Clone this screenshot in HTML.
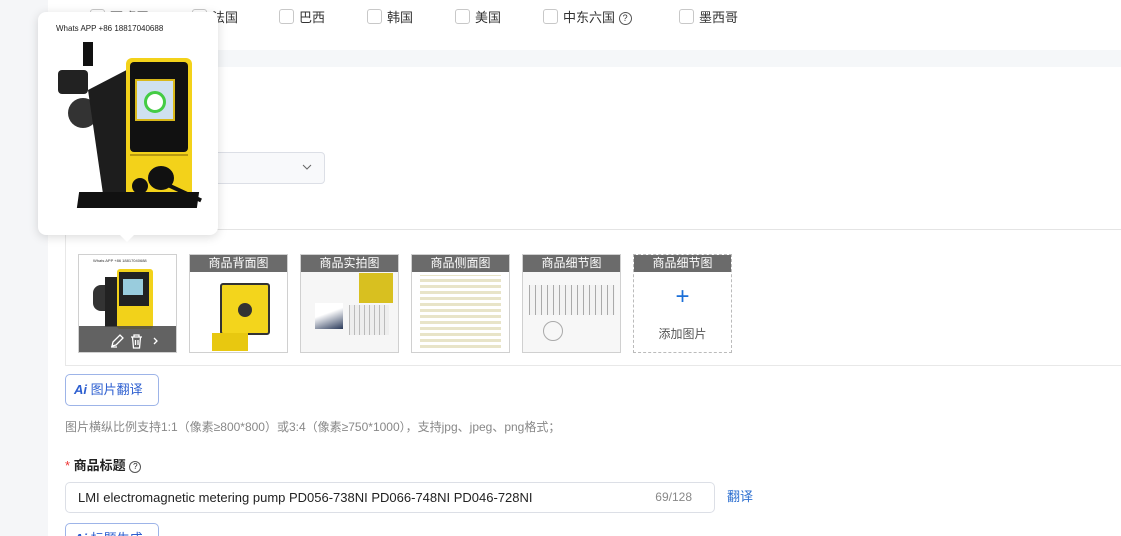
<!DOCTYPE html>
<html><head><meta charset="utf-8"><style>
*{box-sizing:border-box;margin:0;padding:0}
html,body{width:1121px;height:536px;overflow:hidden}
body{background:#fff;font-family:"Liberation Sans","Noto Sans CJK SC",sans-serif;font-size:13px;color:#333;position:relative}
.abs{position:absolute}
.cb{position:absolute;top:9px;width:15px;height:15px;border:1px solid #c8c8c8;border-radius:3px;background:#fff}
.cl{position:absolute;top:7px;font-size:13px;color:#333}
.th{position:absolute;top:254px;width:99px;height:99px;border:1px solid #d0d0d0;background:#f3f3f3;overflow:hidden}
.th .lab{position:absolute;left:0;top:0;width:100%;height:17px;background:#6b6b6b;color:#fff;font-size:12px;text-align:center;line-height:17px}
.doc{position:absolute;left:8px;right:8px;top:20px;bottom:4px;background:repeating-linear-gradient(0deg,#e8e4c8 0 3px,#fff 3px 6px)}
</style></head><body>
<div class="abs" style="left:0;top:0;width:48px;height:536px;background:#f5f6f8"></div>
<div class="abs" style="left:48px;top:50px;width:1073px;height:17px;background:#f5f7f9"></div>

<div class="cb" style="left:90px"></div><span class="cl" style="left:110px">西班牙</span>
<div class="cb" style="left:192px"></div><span class="cl" style="left:212px">法国</span>
<div class="cb" style="left:279px"></div><span class="cl" style="left:299px">巴西</span>
<div class="cb" style="left:367px"></div><span class="cl" style="left:387px">韩国</span>
<div class="cb" style="left:455px"></div><span class="cl" style="left:475px">美国</span>
<div class="cb" style="left:543px"></div><span class="cl" style="left:563px">中东六国 <span style="display:inline-block;width:13px;height:13px;border:1px solid #555;border-radius:50%;font-size:9px;text-align:center;line-height:11px;vertical-align:1px">?</span></span>
<div class="cb" style="left:679px"></div><span class="cl" style="left:699px">墨西哥</span>

<div class="abs" style="left:150px;top:152px;width:175px;height:32px;border:1px solid #dcdfe6;border-radius:4px;background:#f8f9fb"></div>
<svg class="abs" style="left:302px;top:163px" width="10" height="8"><path d="M1 2l4 4 4-4" stroke="#666" fill="none"/></svg>

<div class="abs" style="left:48px;top:229px;width:1073px;height:1px;background:#e4e4e4"></div>
<div class="abs" style="left:65px;top:229px;width:1060px;height:137px;border:1px solid #e8e8e8;border-top:none"></div>

<div class="th" style="left:78px;background:#fff">
 <div style="position:absolute;left:14px;top:3px;font-size:4px">Whats APP +86 18817040688</div>
 <div style="position:absolute;left:14px;top:30px;width:20px;height:26px;background:#333;border-radius:8px"></div>
 <div style="position:absolute;left:26px;top:22px;width:16px;height:50px;background:#222"></div>
 <div style="position:absolute;left:38px;top:14px;width:36px;height:60px;background:#f2d21a;border-radius:3px"></div>
 <div style="position:absolute;left:40px;top:17px;width:30px;height:34px;background:#222"></div>
 <div style="position:absolute;left:44px;top:24px;width:20px;height:16px;background:#9cd"></div>
 <div style="position:absolute;left:0;top:71px;width:100%;height:28px;background:rgba(70,70,70,.85)"></div>
 <svg style="position:absolute;left:30px;top:78px" width="50" height="16" fill="none" stroke="#fff" stroke-width="1.3"><path d="M3 13l1-4 7-7 3 3-7 7z M2 14h6"/><path d="M22 4h11 M25 4V2h5v2 M23.5 4l1 11h6l1-11 M26.5 7v5 M29 7v5"/><path d="M45 5l3 3-3 3"/></svg>
</div>
<div class="th" style="left:189px;background:#fff"><div class="lab">商品背面图</div>
 <div style="position:absolute;left:30px;top:28px;width:50px;height:52px;background:#f3d51c;border:2px solid #333;border-radius:3px"></div>
 <div style="position:absolute;left:48px;top:48px;width:14px;height:14px;border-radius:50%;background:#333"></div>
 <div style="position:absolute;left:22px;top:78px;width:36px;height:18px;background:#e8c810"></div>
</div>
<div class="th" style="left:300px;background:#f6f6f6"><div class="lab">商品实拍图</div>
 <div style="position:absolute;left:58px;top:18px;width:34px;height:30px;background:#d8c020"></div>
 <div style="position:absolute;left:14px;top:48px;width:28px;height:26px;background:linear-gradient(160deg,#fff 40%,#2a3a5a)"></div>
 <div style="position:absolute;left:48px;top:50px;width:40px;height:30px;background:repeating-linear-gradient(90deg,#bbb 0 1px,#eee 1px 5px)"></div>
</div>
<div class="th" style="left:411px;background:#fff"><div class="lab">商品侧面图</div><div class="doc"></div></div>
<div class="th" style="left:522px;background:#f7f7f7"><div class="lab">商品细节图</div>
 <div style="position:absolute;left:6px;top:30px;width:86px;height:30px;background:repeating-linear-gradient(90deg,#aaa 0 1px,#f3f3f3 1px 6px)"></div>
 <div style="position:absolute;left:20px;top:66px;width:20px;height:20px;border:1px solid #aaa;border-radius:50%"></div>
</div>
<div class="th" style="left:633px;background:#fff;border:1px dashed #bbb"><div class="lab">商品细节图</div>
 <div style="position:absolute;left:0;width:100%;top:28px;text-align:center;color:#1a6fd8;font-size:24px;font-weight:300">+</div>
 <div style="position:absolute;left:0;width:100%;top:70px;text-align:center;font-size:12px;color:#555">添加图片</div>
</div>

<div class="abs" style="left:65px;top:374px;width:94px;height:32px;border:1px solid #9db4e8;border-radius:5px;color:#2d5fd0;font-size:13px;line-height:30px;padding-left:8px"><b style="font-style:italic">Ai</b> 图片翻译</div>
<div class="abs" style="left:65px;top:418px;font-size:12px;color:#888">图片横纵比例支持1:1（像素≥800*800）或3:4（像素≥750*1000），支持jpg、jpeg、png格式；</div>

<div class="abs" style="left:65px;top:455px;font-size:13px;font-weight:bold;color:#222"><span style="color:#e33;font-weight:normal">*</span> 商品标题 <span style="display:inline-block;width:12px;height:12px;border:1px solid #555;border-radius:50%;font-size:8px;text-align:center;line-height:10px;font-weight:normal;vertical-align:1px">?</span></div>
<div class="abs" style="left:65px;top:482px;width:650px;height:31px;border:1px solid #dcdfe6;border-radius:5px;line-height:29px;padding-left:12px;font-size:13px;color:#222">LMI electromagnetic metering pump PD056-738NI PD066-748NI PD046-728NI<span style="position:absolute;right:22px;color:#888;font-size:12px">69/128</span></div>
<div class="abs" style="left:727px;top:486px;color:#2d6fd0;font-size:13px">翻译</div>
<div class="abs" style="left:65px;top:523px;width:94px;height:32px;border:1px solid #9db4e8;border-radius:5px;color:#2d5fd0;line-height:30px;padding-left:8px"><b style="font-style:italic">Ai</b> 标题生成</div>

<div class="abs" style="left:38px;top:12px;width:180px;height:223px;background:#fff;border-radius:8px;box-shadow:0 2px 10px rgba(0,0,0,.15)">
 <div style="position:absolute;left:18px;top:12px;font-size:8px;color:#222">Whats APP +86 18817040688</div>
 <div style="position:absolute;left:20px;top:58px;width:30px;height:24px;background:#222;border-radius:4px"></div>
 <div style="position:absolute;left:30px;top:86px;width:30px;height:30px;background:#333;border-radius:50%"></div>
 <div style="position:absolute;left:45px;top:30px;width:10px;height:24px;background:#111"></div>
 <div style="position:absolute;left:50px;top:52px;width:50px;height:130px;background:#1d1d1d;clip-path:polygon(0 20%,100% 0,100% 100%,30% 100%)"></div>
 <div style="position:absolute;left:88px;top:46px;width:66px;height:146px;background:#f3d21a;border-radius:6px"></div>
 <div style="position:absolute;left:92px;top:50px;width:58px;height:90px;background:#111;border-radius:4px"></div>
 <div style="position:absolute;left:97px;top:67px;width:40px;height:42px;background:#cfe1ef;border:2px solid #d8b81a"></div>
 <div style="position:absolute;left:106px;top:79px;width:22px;height:22px;border:3px solid #4c4;border-radius:50%;background:#fff"></div>
 <div style="position:absolute;left:92px;top:142px;width:58px;height:2px;background:#b99a10"></div>
 <div style="position:absolute;left:40px;top:180px;width:120px;height:16px;background:#111;transform:skewX(-8deg)"></div>
 <div style="position:absolute;left:94px;top:166px;width:16px;height:16px;border-radius:50%;background:#111"></div>
 <div style="position:absolute;left:110px;top:154px;width:26px;height:24px;border-radius:50%;background:#111"></div>
 <div style="position:absolute;left:125px;top:178px;width:40px;height:4px;background:#111;transform:rotate(25deg)"></div>
 <div style="position:absolute;left:82px;top:223px;width:0;height:0;border-left:7px solid transparent;border-right:7px solid transparent;border-top:7px solid #fff"></div>
</div>
</body></html>
